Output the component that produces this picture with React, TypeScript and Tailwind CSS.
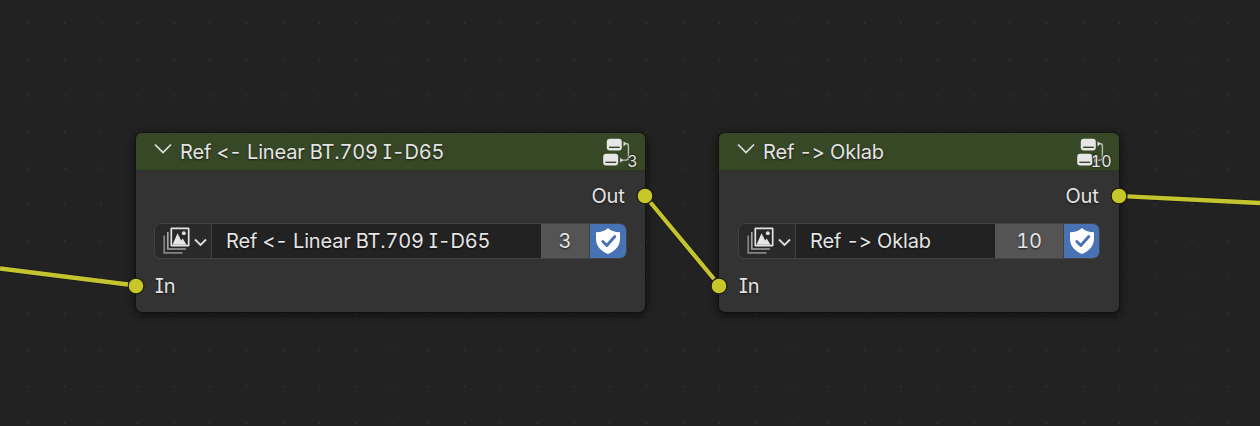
const TEXT =
  "font-['Inter',sans-serif] text-[20px] leading-none tracking-[-0.18px] text-[#e4e4e4] whitespace-pre [font-feature-settings:'tnum','cv08','calt'_0] [text-shadow:0_1px_2px_rgba(0,0,0,0.65)]";

function GroupIcon() {
  return (
    <svg width="36" height="36" viewBox="0 0 36 36" fill="none">
      <path d="M21.500 10.500h1.300c1.700 0 2.600.9 2.600 2.500v11.500c0 1.700-.8 2.600-2.400 2.600H18" stroke="#b9bfb2" strokeWidth="1.400" />
      <path d="M20.500 8.200v5.200l2.800-2.600zM17.200 24.700v5l2.800-2.500z" fill="#dfe2db" />
      <rect x="3.800" y="5.800" width="15" height="11.800" rx="3" fill="#e6e6e6" />
      <rect x="6" y="13.600" width="10.800" height="1.400" fill="#35462a" />
      <rect x=".2" y="20.800" width="15" height="11.800" rx="3" fill="#e6e6e6" />
      <rect x="2.400" y="28.600" width="10.800" height="1.400" fill="#35462a" />
    </svg>
  );
}

function ImagesIcon() {
  return (
    <svg width="28" height="28" viewBox="0 0 28 28" fill="none">
      <path d="M1.200 8.500v17.300h18.300" stroke="#858585" strokeWidth="1.700" />
      <path d="M4.800 5v17h18" stroke="#a5a5a5" strokeWidth="1.700" />
      <rect x="8.300" y="1.300" width="17.400" height="17.400" rx=".5" stroke="#e2e2e2" strokeWidth="1.700" />
      <path d="M9.500 17.800 14.500 6.300l3.700 7.200 1.500-2 3.800 6.300z" fill="#e6e6e6" />
      <circle cx="20.800" cy="6.200" r="1.900" fill="#e6e6e6" />
    </svg>
  );
}

function ShieldIcon() {
  return (
    <svg width="26" height="28" viewBox="0 0 26 28" fill="none">
      <path d="M13 1c3.200 2.900 7 4.200 12 4.200v6.300c0 7.200-4.300 12.300-12 15.500C5.300 23.800 1 18.700 1 11.500V5.200C6 5.200 9.800 3.900 13 1z" fill="#fff" />
      <path d="m7.800 14.500 4 4 8-9" stroke="#4772b3" strokeWidth="2.900" strokeLinecap="round" strokeLinejoin="round" />
    </svg>
  );
}

function Socket({ place }: { place: string }) {
  return (
    <svg width="18" height="18" viewBox="0 0 18 18" className={`absolute ${place}`}>
      <circle cx="9" cy="9" r="7.900" fill="#c7c729" stroke="#1b1b12" strokeWidth="1.200" />
    </svg>
  );
}

interface NodeProps {
  title: string;
  users: string;
  frame: string;
  countWidth: string;
  shieldWidth: string;
  fieldMargin: string;
}

function GroupNode({ title, users, frame, countWidth, shieldWidth, fieldMargin }: NodeProps) {
  return (
    <section className={`absolute top-[133px] h-[179px] rounded-[6px] bg-[#333333] shadow-[0_2px_9px_2px_rgba(0,0,0,0.5),0_0_0_1px_#1c1c1c] ${frame}`}>
      <header className="relative flex h-[38px] items-center rounded-t-[6px] border-b border-[#2b3422] bg-[#374826] pl-[18px]">
        <svg width="18" height="12" viewBox="0 0 18 12" fill="none" className="mb-[6px]">
          <path d="m1 1.500 8 8 8-8" stroke="#e0e0e0" strokeWidth="1.700" />
        </svg>
        <h2 className={`mt-px ml-[8px] ${TEXT}`}>{title}</h2>
        <div className="absolute top-0 right-[6px]">
          <GroupIcon />
        </div>
        <span className="absolute right-[7.500px] bottom-0 font-['Inter',sans-serif] text-[16px] leading-[18px] text-[#e6e6e6] [font-feature-settings:'tnum'] [text-shadow:0_0_2px_#222,0_0_2px_#222,0_0_1px_#222]">
          {users}
        </span>
      </header>
      <div className="flex h-[52px] items-center justify-end pr-[20.500px] pb-[3px]">
        <span className={TEXT}>Out</span>
      </div>
      <div className={`flex h-[36px] overflow-hidden rounded-[7px] border border-[#434343] bg-[#2b2b2b] ${fieldMargin}`}>
        <button className="flex w-[57px] shrink-0 items-center border-r border-[#434343] bg-[#292929] pl-[7.500px]">
          <ImagesIcon />
          <svg width="13" height="9" viewBox="0 0 13 9" fill="none" className="mt-[3px] ml-[3px]">
            <path d="m1 1.500 5.500 5.500L12 1.500" stroke="#dedede" strokeWidth="1.900" />
          </svg>
        </button>
        <div className="flex flex-1 items-center bg-[#222222] pl-[14px]">
          <span className={TEXT}>{title}</span>
        </div>
        <div className={`flex items-center justify-center border-r border-[#404040] bg-[#545454] ${countWidth}`}>
          <span className={TEXT}>{users}</span>
        </div>
        <button className={`flex items-center justify-center bg-[#4772b3] ${shieldWidth}`}>
          <ShieldIcon />
        </button>
      </div>
      <div className={`flex h-[53px] items-center ${fieldMargin}`}>
        <span className={`ml-px ${TEXT}`}>In</span>
      </div>
      <Socket place="top-[54px] -right-[9px]" />
      <Socket place="top-[144px] -left-[9px]" />
    </section>
  );
}

export default function App() {
  return (
    <main className="relative h-[426px] w-[1260px] overflow-hidden bg-[#222222]">
      <svg width="1260" height="426" className="absolute inset-0">
        <defs>
          <pattern id="dots" width="36.360" height="36.360" x="27.500" y="22" patternUnits="userSpaceOnUse">
            <rect width="2" height="2" fill="#2d2d2d" />
          </pattern>
        </defs>
        <rect width="1260" height="426" fill="url(#dots)" />
      </svg>
      <GroupNode title="Ref <- Linear BT.709 I-D65" users="3" frame="left-[136px] w-[509px]" countWidth="w-[49px]" shieldWidth="w-[36px]" fieldMargin="mx-[18px]" />
      <GroupNode title="Ref -> Oklab" users="10" frame="left-[719px] w-[400px]" countWidth="w-[69px]" shieldWidth="w-[35px]" fieldMargin="mx-[19px]" />
      <svg width="1260" height="426" className="pointer-events-none absolute inset-0" fill="none">
        <g stroke="#1b1b12" strokeWidth="6">
          <path d="M0 268.500 127.500 284.500M651 203 713.500 278.500M1128 196.300 1260 203" />
        </g>
        <g stroke="#c4c430" strokeWidth="4.300">
          <path d="M0 268.500 128 284.500M650.500 202.500 714 279M1127.500 196.300 1260 203" />
        </g>
      </svg>
    </main>
  );
}
